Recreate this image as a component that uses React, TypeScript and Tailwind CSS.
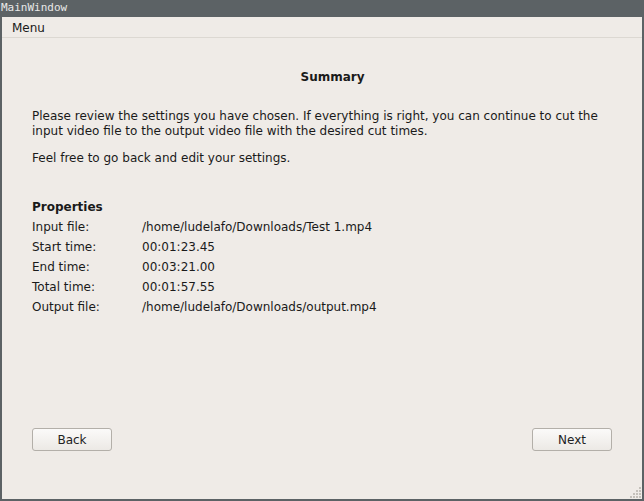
import { FC } from "react"

const rows: [string, string][] = [
  ["Input file:", "/home/ludelafo/Downloads/Test 1.mp4"],
  ["Start time:", "00:01:23.45"],
  ["End time:", "00:03:21.00"],
  ["Total time:", "00:01:57.55"],
  ["Output file:", "/home/ludelafo/Downloads/output.mp4"],
]

const Button: FC<{ label: string }> = ({ label }) => (
  <button className="w-[80px] h-[23px] rounded-[3px] border border-[#b3afa9] bg-gradient-to-b from-[#fbfaf9] to-[#ece9e5] text-[12px] text-[#222] leading-none">
    {label}
  </button>
)

const SizeGrip: FC = () => {
  const dots: JSX.Element[] = []
  const pts = [[9, 0], [9, 3], [6, 3], [9, 6], [6, 6], [3, 6], [9, 9], [6, 9], [3, 9], [0, 9]]
  pts.map(([x, y], i) => dots.push(<rect key={i} x={x} y={y} width="2" height="2" fill="#c4c0ba" />))
  return (
    <svg width="11" height="11" className="absolute right-[1px] bottom-[1px]">
      {dots}
    </svg>
  )
}

export default function App() {
  return (
    <div className="w-[644px] h-[501px] bg-[#5c6265] flex flex-col" style={{ fontFamily: '"DejaVu Sans", sans-serif' }}>
      <div className="h-[17px] px-[1px] text-[11px] leading-[16px] text-[#e8e8e8]" style={{ fontFamily: '"DejaVu Sans Mono", monospace' }}>
        MainWindow
      </div>
      <div className="relative flex-1 mx-[2px] mb-[2px] bg-[#efebe7] flex flex-col text-[12px] text-[#1a1a1a]">
        <div className="h-[21px] border-b border-[#dcd8d2] px-[10px] pt-[1px] leading-[20px]">Menu</div>
        <div className="flex-1 flex flex-col px-[30px]">
          <h2 className="font-bold text-center mt-[31px] pl-[21px] leading-[16px]">Summary</h2>
          <p className="mt-[24px] leading-[15px]">
            Please review the settings you have chosen. If everything is right, you can continue to cut the input video file to the output video file with the desired cut times.
          </p>
          <p className="mt-[12px] leading-[15px]">Feel free to go back and edit your settings.</p>
          <h3 className="font-bold mt-[34px] leading-[15px]">Properties</h3>
          <div className="grid grid-cols-[110px_1fr] gap-y-[5px] mt-[5px] leading-[15px]">
            {rows.map(([k, v], i) => (
              <div key={i} className="contents">
                <span>{k}</span>
                <span>{v}</span>
              </div>
            ))}
          </div>
          <div className="flex-1" />
          <div className="flex justify-between mb-[48px]">
            <Button label="Back" />
            <Button label="Next" />
          </div>
        </div>
        <SizeGrip />
      </div>
    </div>
  )
}
